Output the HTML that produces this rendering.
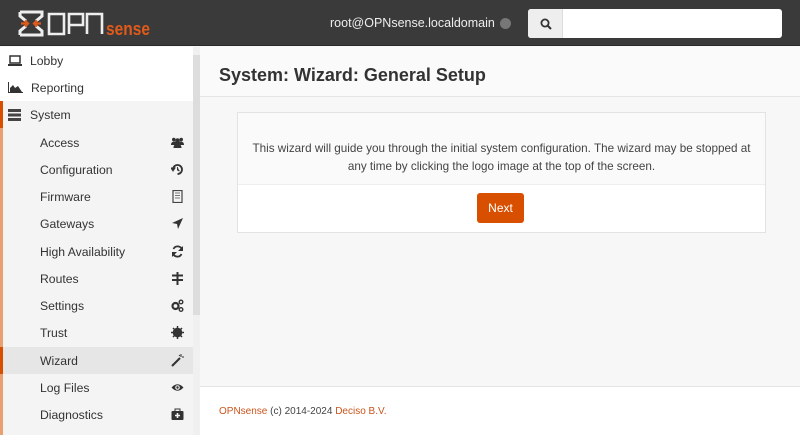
<!DOCTYPE html>
<html><head><meta charset="utf-8"><style>
*{margin:0;padding:0;box-sizing:border-box}
body{width:800px;height:435px;overflow:hidden;font-family:"Liberation Sans",sans-serif;background:#f7f7f7;position:relative;color:#333}
.hdr{position:absolute;left:0;top:0;width:800px;height:46px;background:#3a3a3a;border-bottom:1px solid #2a2a2a}
.user{position:absolute;left:330px;top:16px;font-size:12.5px;color:#eee}
.dot{position:absolute;left:500px;top:18px;width:11px;height:11px;border-radius:50%;background:#777}
.srch{position:absolute;left:528px;top:9px;width:254px;height:29px;background:#fff;border-radius:3px;overflow:hidden}
.srch .b{position:absolute;left:0;top:0;width:35px;height:29px;background:#eee;border-right:1px solid #ddd}
.side{position:absolute;left:0;top:47px;width:200px;height:388px;background:#f4f4f4}
.side .it{position:absolute;left:0;width:193px;height:27px;font-size:12.2px;line-height:28px;color:#333}
.side .top{background:#fff}
.side .sub{padding-left:40px}
.side .ic{position:absolute;right:9px;top:7px;width:13px;height:13px}
.sb{position:absolute;left:193px;top:47px;width:7px;height:388px;background:#f0f0f0}
.sb i{position:absolute;left:0;top:8px;width:7px;height:260px;background:#ddd}
.title{position:absolute;left:200px;top:47px;width:600px;height:50px;background:#fafafa;border-bottom:1px solid #e5e5e5;font-size:18px;font-weight:bold;color:#333;padding:18px 0 0 19px}
.box{position:absolute;left:237px;top:112px;width:529px;height:121px;background:#fff;border:1px solid #e3e3e3}
.box .t{height:72px;background:#fafafa;border-bottom:1px solid #eee;font-size:11.7px;text-align:center;color:#444;padding-top:27px;line-height:18px}
.btn{position:absolute;left:239px;top:80px;width:47px;height:30px;background:#d94f00;border-radius:3px;color:#fff;font-size:12px;text-align:center;line-height:30px}
.foot{position:absolute;left:200px;top:386px;width:600px;height:49px;background:#fff;border-top:1px solid #e5e5e5;font-size:10px;padding:19px 0 0 19px;color:#444}
.foot span{color:#c9541c}
</style></head><body>
<div class="hdr">
<svg style="position:absolute;left:18px;top:10px" width="135" height="27" viewBox="0 0 135 27">
<path d="M2 2h22v4l-6 5M2 2v4l6 5M2 25h22v-4l-6-5M2 25v-4l6-5" fill="none" stroke="#eee" stroke-width="3"/>
<path d="M3 13.5h7M23 13.5h-7M7 10.5l3 3-3 3M19 10.5l-3 3 3 3" fill="none" stroke="#e05a1a" stroke-width="2.2"/>
<path d="M31 4h15v20h-15z M51 24V4h14v11h-14 M69 24V4h15v20" fill="none" stroke="#eee" stroke-width="2.6"/>
<text x="88" y="25" font-family="Liberation Sans" font-weight="bold" font-size="18" fill="#e05a1a" textLength="44" lengthAdjust="spacingAndGlyphs">sense</text>
</svg>
<div class="user">root@OPNsense.localdomain</div>
<div class="dot"></div>
<div class="srch"><div class="b"><svg style="position:absolute;left:12px;top:9px" width="12" height="12" viewBox="0 0 12 12"><circle cx="5" cy="5" r="3.6" fill="none" stroke="#333" stroke-width="1.8"/><path d="M7.5 7.5l3.5 3.5" stroke="#333" stroke-width="2"/></svg></div></div>
</div>
<div class="side">
<div class="it top" style="top:0;padding-left:30px"><svg style="position:absolute;left:8px;top:8px" width="14" height="11"><rect x="2" y="1" width="10" height="7" fill="none" stroke="#333" stroke-width="1.5"/><rect x="0" y="9" width="14" height="2" fill="#333"/></svg>Lobby</div>
<div class="it top" style="top:27px;padding-left:31px"><svg style="position:absolute;left:8px;top:8px" width="15" height="11"><path d="M0 0v11h15v-1H1V0z M2 10V6l3-3 2 3 3-2 4 6z" fill="#333"/></svg>Reporting</div>
<div class="it" style="top:54px;padding-left:27px;background:#f4f4f4;border-left:3px solid #d94f00"><svg style="position:absolute;left:5px;top:8px" width="13" height="12"><rect y="0" width="13" height="3" fill="#444"/><rect y="4.5" width="13" height="3" fill="#444"/><rect y="9" width="13" height="3" fill="#444"/></svg>System</div>
<div style="position:absolute;left:0;top:81px;width:3px;height:307px;background:#e8a070"></div>
<div class="it sub" style="top:82px">Access<svg class="ic" viewBox="0 0 13 13"><circle cx="2.8" cy="3.5" r="1.8" fill="#333"/><circle cx="10.2" cy="3.5" r="1.8" fill="#333"/><circle cx="6.5" cy="4.5" r="2.2" fill="#333"/><path d="M0 9c0-2.5 1.5-3.5 3-3.5h7c1.5 0 3 1 3 3.5z M2.5 12c0-3 2-4.5 4-4.5s4 1.5 4 4.5z" fill="#333"/></svg></div>
<div class="it sub" style="top:109px">Configuration<svg class="ic" viewBox="0 0 13 13"><path d="M2 6.5A4.5 4.5 0 1 1 6.5 11" fill="none" stroke="#333" stroke-width="1.8"/><path d="M0 5l2 3 2-3z M6.5 4v3l2 1" fill="#333" stroke="#333" stroke-width="1"/></svg></div>
<div class="it sub" style="top:136px">Firmware<svg class="ic" viewBox="0 0 13 13"><rect x="2" y="0.5" width="9" height="12" fill="none" stroke="#444" stroke-width="1.2"/><path d="M4 3h5M4 5.5h5M4 8h5" stroke="#777"/></svg></div>
<div class="it sub" style="top:163px">Gateways<svg class="ic" viewBox="0 0 13 13"><path d="M12 1L1 6l5 1 1 5z" fill="#333"/></svg></div>
<div class="it sub" style="top:191px">High Availability<svg class="ic" viewBox="0 0 13 13"><path d="M11 5A4.5 4.5 0 0 0 2.5 4M2 8a4.5 4.5 0 0 0 8.5 1" fill="none" stroke="#333" stroke-width="1.8"/><path d="M12 1v5H7zM1 12V7h5z" fill="#333"/></svg></div>
<div class="it sub" style="top:218px">Routes<svg class="ic" viewBox="0 0 13 13"><path d="M6.5 0v13M1 3.5h11M1 8h11" stroke="#333" stroke-width="2"/></svg></div>
<div class="it sub" style="top:245px">Settings<svg class="ic" viewBox="0 0 13 13"><circle cx="4.5" cy="7" r="3" fill="none" stroke="#333" stroke-width="2.2"/><circle cx="10" cy="3" r="1.8" fill="none" stroke="#333" stroke-width="1.4"/><circle cx="10" cy="10.5" r="1.8" fill="none" stroke="#333" stroke-width="1.4"/></svg></div>
<div class="it sub" style="top:272px">Trust<svg class="ic" viewBox="0 0 13 13"><circle cx="6.5" cy="6.5" r="4.8" fill="#333"/><path d="M6.5 0v13M0 6.5h13M2 2l9 9M11 2l-9 9" stroke="#333" stroke-width="1.5"/></svg></div>
<div class="it sub" style="top:300px;background:#e6e6e6;border-left:3px solid #d94f00;padding-left:37px">Wizard<svg class="ic" viewBox="0 0 13 13"><path d="M1 12L9 4" stroke="#333" stroke-width="2"/><path d="M10 0v3M11 3h2M8 1l1 1" stroke="#333" stroke-width="1"/></svg></div>
<div class="it sub" style="top:327px">Log Files<svg class="ic" viewBox="0 0 13 13"><path d="M0.5 6.5Q6.5 0 12.5 6.5Q6.5 13 0.5 6.5z" fill="#333"/><circle cx="6.5" cy="6.5" r="2.3" fill="#f4f4f4"/><circle cx="6.5" cy="6.5" r="1.2" fill="#333"/></svg></div>
<div class="it sub" style="top:354px">Diagnostics<svg class="ic" viewBox="0 0 13 13"><rect x="0.5" y="3" width="12" height="9" rx="1" fill="#333"/><rect x="4" y="1" width="5" height="3" fill="none" stroke="#333"/><path d="M6.5 5v5M4 7.5h5" stroke="#f4f4f4" stroke-width="1.6"/></svg></div>
</div>
<div class="sb"><i></i></div>
<div class="title">System: Wizard: General Setup</div>
<div class="box"><div class="t">This wizard will guide you through the initial system configuration. The wizard may be stopped at<br>any time by clicking the logo image at the top of the screen.</div>
<div class="btn">Next</div></div>
<div class="foot"><span>OPNsense</span> (c) 2014-2024 <span>Deciso B.V.</span></div>
</body></html>
